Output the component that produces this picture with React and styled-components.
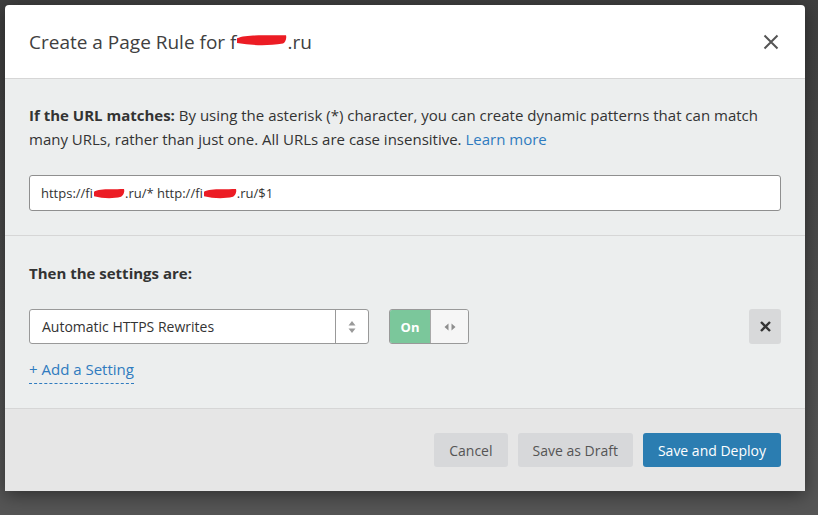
import React from "react";
import styled, { createGlobalStyle } from "styled-components";

const GlobalStyle = createGlobalStyle`
  html, body {
    margin: 0;
    padding: 0;
    background: #4f4f4f;
    font-family: "Open Sans", "Liberation Sans", sans-serif;
  }
`;

const Backdrop = styled.div`
  width: 818px;
  height: 515px;
  box-sizing: border-box;
  padding: 5px;
  background: linear-gradient(#3f3f3f, #555 90%);
  overflow: hidden;
`;

const Modal = styled.div`
  width: 800px;
  border-radius: 4px 4px 0 0;
  overflow: hidden;
  box-shadow: 0 4px 18px rgba(0, 0, 0, 0.45);
`;

const Header = styled.div`
  height: 73px;
  background: #fff;
  border-bottom: 1px solid #d6d6d6;
  display: flex;
  align-items: center;
  justify-content: space-between;
  padding: 0 24px;
`;

const Title = styled.h2`
  margin: 0;
  font-size: 19px;
  font-weight: 400;
  color: #404040;
  display: flex;
  align-items: center;
`;

const CloseButton = styled.button`
  border: 0;
  background: none;
  padding: 0;
  width: 20px;
  height: 20px;
  display: flex;
  align-items: center;
  justify-content: center;
  cursor: pointer;
`;

const Section = styled.div`
  background: #eceeee;
  padding: ${(p) => p.$pad || "24px"};
  border-bottom: 1px solid #d6d6d6;
`;

const Text = styled.p`
  margin: 0;
  font-size: 15px;
  line-height: 24px;
  color: #333;
`;

const Strong = styled.strong`
  font-weight: 700;
`;

const Link = styled.a`
  color: #2f7bbf;
  text-decoration: none;
  cursor: pointer;
`;

const UrlInput = styled.div`
  margin-top: 24px;
  height: 36px;
  box-sizing: border-box;
  background: #fff;
  border: 1px solid #8f8f8f;
  border-radius: 3px;
  padding: 0 11px;
  display: flex;
  align-items: center;
  font-size: 13px;
  color: #333;
`;

const Redacted = styled.span`
  display: inline-block;
  position: relative;
  width: ${(p) => p.$w}px;
  height: 1em;
  vertical-align: middle;

  svg {
    position: absolute;
    left: 0;
    top: ${(p) => p.$top || 0}px;
  }
`;

const SettingRow = styled.div`
  margin-top: 24px;
  display: flex;
  align-items: center;
`;

const Select = styled.div`
  width: 340px;
  height: 35px;
  box-sizing: border-box;
  background: #fff;
  border: 1px solid #999;
  border-radius: 3px;
  display: flex;
`;

const SelectValue = styled.div`
  flex: 1;
  display: flex;
  align-items: center;
  padding: 0 12px;
  font-size: 14px;
  color: #333;
  border-right: 1px solid #999;
`;

const SelectArrows = styled.div`
  width: 32px;
  display: flex;
  align-items: center;
  justify-content: center;
`;

const Toggle = styled.div`
  margin-left: 20px;
  width: 80px;
  height: 35px;
  box-sizing: border-box;
  border: 1px solid #999;
  border-radius: 3px;
  overflow: hidden;
  display: flex;
`;

const ToggleOn = styled.div`
  width: 40px;
  background: #7bc79b;
  color: #fff;
  font-size: 13px;
  font-weight: 700;
  display: flex;
  align-items: center;
  justify-content: center;
  border-right: 1px solid #a9a9a9;
`;

const ToggleHandle = styled.div`
  flex: 1;
  background: #f6f6f6;
  display: flex;
  align-items: center;
  justify-content: center;
`;

const RemoveButton = styled.button`
  margin-left: auto;
  width: 32px;
  height: 35px;
  border: 0;
  border-radius: 3px;
  background: #d8d9da;
  display: flex;
  align-items: center;
  justify-content: center;
  padding: 0;
`;

const AddSetting = styled.a`
  display: inline-block;
  margin-top: 14px;
  font-size: 15px;
  line-height: 23px;
  color: #2f7bbf;
  border-bottom: 1px dashed #2f7bbf;
  padding-bottom: 2px;
  cursor: pointer;
`;

const Footer = styled.div`
  background: #e6e6e6;
  padding: 24px;
  display: flex;
  justify-content: flex-end;
  gap: 10px;
`;

const Button = styled.button`
  height: 34px;
  padding: 0 15px;
  border: 0;
  border-radius: 3px;
  font-family: inherit;
  font-size: 14px;
  background: ${(p) => (p.$primary ? "#2b7db1" : "#d7d8da")};
  color: ${(p) => (p.$primary ? "#fff" : "#555")};
  cursor: pointer;
`;

// red marker scribble hiding part of the domain
const Scribble = ({ w, h }) => (
  <svg width={w} height={h} viewBox={`0 0 ${w} ${h}`}>
    <path
      d={`M1 ${h * 0.35} C${w * 0.2} ${h * 0.0} ${w * 0.6} ${h * 0.15} ${w - 1} ${h * 0.1} C${w} ${h * 0.4} ${w - 2} ${h * 0.7} ${w - 4} ${h * 0.8} C${w * 0.6} ${h} ${w * 0.3} ${h * 0.95} 1 ${h * 0.75} Z`}
      fill="#ec1c24"
    />
  </svg>
);

export default function App() {
  return (
    <>
      <GlobalStyle />
      <Backdrop>
        <Modal>
          <Header>
            <Title>
              Create a Page Rule for f
              <Redacted $w={51} $top={2}>
                <Scribble w={51} h={12} />
              </Redacted>
              .ru
            </Title>
            <CloseButton aria-label="Close">
              <svg width="16" height="16" viewBox="0 0 16 16">
                <path d="M1.5 1.5 L14.5 14.5 M14.5 1.5 L1.5 14.5" stroke="#555" strokeWidth="2" />
              </svg>
            </CloseButton>
          </Header>

          <Section>
            <Text>
              <Strong>If the URL matches:</Strong> By using the asterisk (*) character, you can create dynamic
              patterns that can match many URLs, rather than just one. All URLs are case insensitive.{" "}
              <Link>Learn more</Link>
            </Text>
            <UrlInput>
              https://fi
              <Redacted $w={32} $top={1}>
                <Scribble w={32} h={11} />
              </Redacted>
              .ru/* http://fi
              <Redacted $w={34} $top={1}>
                <Scribble w={34} h={11} />
              </Redacted>
              .ru/$1
            </UrlInput>
          </Section>

          <Section $pad="25px 24px 24px">
            <Text>
              <Strong>Then the settings are:</Strong>
            </Text>
            <SettingRow>
              <Select>
                <SelectValue>Automatic HTTPS Rewrites</SelectValue>
                <SelectArrows>
                  <svg width="8" height="14" viewBox="0 0 8 14">
                    <path d="M4 1 L7.5 5.5 H0.5 Z M4 13 L7.5 8.5 H0.5 Z" fill="#9a9a9a" />
                  </svg>
                </SelectArrows>
              </Select>
              <Toggle>
                <ToggleOn>On</ToggleOn>
                <ToggleHandle>
                  <svg width="12" height="8" viewBox="0 0 12 8">
                    <path d="M0.5 4 L4.5 0.5 V7.5 Z M11.5 4 L7.5 0.5 V7.5 Z" fill="#8e8e8e" />
                  </svg>
                </ToggleHandle>
              </Toggle>
              <RemoveButton aria-label="Remove setting">
                <svg width="11" height="11" viewBox="0 0 11 11">
                  <path d="M1 1 L10 10 M10 1 L1 10" stroke="#333" strokeWidth="2.4" />
                </svg>
              </RemoveButton>
            </SettingRow>
            <AddSetting>+ Add a Setting</AddSetting>
          </Section>

          <Footer>
            <Button>Cancel</Button>
            <Button>Save as Draft</Button>
            <Button $primary>Save and Deploy</Button>
          </Footer>
        </Modal>
      </Backdrop>
    </>
  );
}
